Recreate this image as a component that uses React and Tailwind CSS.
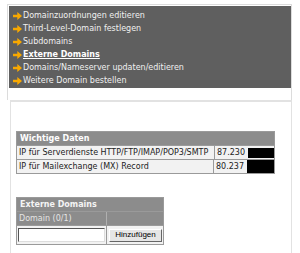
import React from "react";

const Arrow = () => (
  <svg width="9" height="8" viewBox="0 0 9 8" className="shrink-0">
    <path d="M0 2.8h4.3V0L9 4 4.3 8V5.2H0z" fill="#f8a800" />
  </svg>
);

const items = [
  { t: "Domainzuordnungen editieren" },
  { t: "Third-Level-Domain festlegen" },
  { t: "Subdomains" },
  { t: "Externe Domains", active: true },
  { t: "Domains/Nameserver updaten/editieren" },
  { t: "Weitere Domain bestellen" },
];

export default function App() {
  return (
    <div
      className="w-[300px] h-[253px] bg-white overflow-hidden text-[8px] leading-none flex flex-col"
      style={{ fontFamily: '"DejaVu Sans", Verdana, sans-serif' }}
    >
      <div className="ml-[7px] mt-[4px] w-[285px] h-[96px] shrink-0 border-l border-r border-t border-[#dcdcdc]">
        <div className="ml-[1px] mt-[1px] h-[82px] bg-[#5f5f5f] pt-[3px] pl-[4px] flex flex-col">
          {items.map((it) => (
            <div key={it.t} className="h-[13px] flex items-center gap-[1px]">
              <Arrow />
              <span
                className={
                  it.active
                    ? "text-white font-bold underline"
                    : "text-[#f0f0f0]"
                }
              >
                {it.t}
              </span>
            </div>
          ))}
        </div>
      </div>
      <div className="ml-[10px] w-[282px] flex-1 border-l border-r border-t-2 border-[#e2e2e2] pl-[5px] pt-[29px]">
        <div className="w-[259px] border border-[#9a9a9a] text-[#222]">
          <div className="h-[13px] bg-[#8c8c8c] text-white font-bold flex items-center pl-[3px]">
            Wichtige Daten
          </div>
          <div className="h-[14px] flex border-t border-[#9a9a9a] bg-[#f2f2f2]">
            <div className="w-[201px] border-r border-[#9a9a9a] flex items-center pl-[2px]">
              IP für Serverdienste HTTP/FTP/IMAP/POP3/SMTP
            </div>
            <div className="flex-1 flex items-center pl-[2px] gap-[3px]">
              <span>87.230</span>
              <div className="w-[26px] h-[10px] bg-black" />
            </div>
          </div>
          <div className="h-[14px] flex border-t border-[#9a9a9a] bg-[#f2f2f2]">
            <div className="w-[201px] border-r border-[#9a9a9a] flex items-center pl-[2px]">
              IP für Mailexchange (MX) Record
            </div>
            <div className="flex-1 flex items-center pl-[2px] gap-[3px]">
              <span>80.237</span>
              <div className="w-[27px] h-[13px] bg-black" />
            </div>
          </div>
        </div>

        <div className="mt-[23px] w-[148px] border border-[#9a9a9a]">
          <div className="h-[13px] bg-[#8c8c8c] text-[#f4f4f4] font-bold flex items-center pl-[3px]">
            Externe Domains
          </div>
          <div className="h-[14px] flex border-t border-[#9a9a9a] bg-[#8c8c8c] text-[#e4e4e4]">
            <div className="w-[90px] border-r border-[#b0b0b0] flex items-center pl-[2px]">
              Domain (0/1)
            </div>
            <div className="flex-1" />
          </div>
          <div className="h-[19px] flex border-t border-[#9a9a9a] bg-[#f2f2f2]">
            <div className="w-[90px] border-r border-[#9a9a9a] flex items-center pl-[1px]">
              <div className="w-[87px] h-[14px] bg-white border border-t-[#555] border-l-[#555] border-b-[#ddd] border-r-[#ddd]" />
            </div>
            <div className="flex-1 flex items-center pl-[2px]">
              <div
                className="w-[53px] h-[13px] bg-[#e6e6e6] border border-t-[#fff] border-l-[#fff] border-b-[#666] border-r-[#666] flex items-center justify-center text-[8px] text-black"
                style={{ fontFamily: '"Liberation Sans", Arial, sans-serif' }}
              >
                Hinzufügen
              </div>
            </div>
          </div>
        </div>
      </div>
    </div>
  );
}
